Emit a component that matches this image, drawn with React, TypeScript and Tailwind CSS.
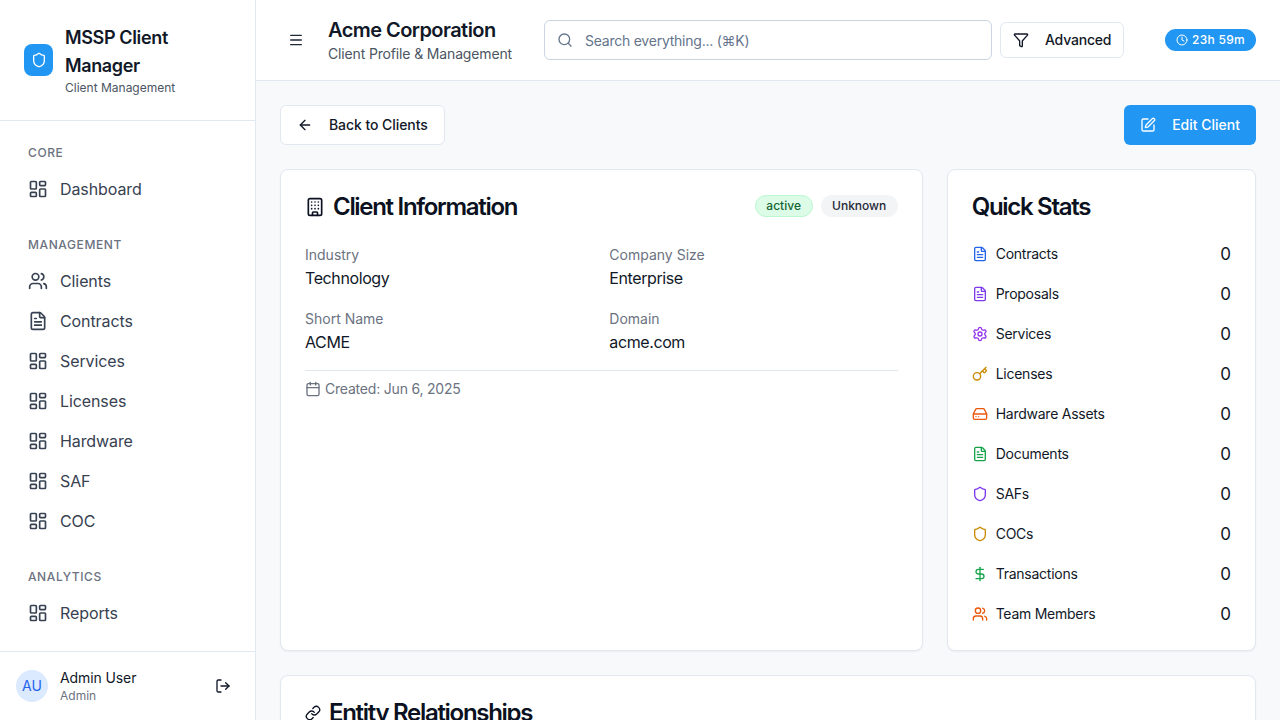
import {
  ArrowLeft,
  Building,
  Calendar,
  Clock,
  DollarSign,
  FileText,
  Filter,
  HardDrive,
  Key,
  LayoutDashboard,
  Link,
  LogOut,
  Menu,
  Search,
  Settings,
  Shield,
  SquarePen,
  Users,
} from 'lucide-react'

const navGroups = [
  { title: 'CORE', items: [{ label: 'Dashboard', icon: LayoutDashboard }] },
  {
    title: 'MANAGEMENT',
    items: [
      { label: 'Clients', icon: Users },
      { label: 'Contracts', icon: FileText },
      { label: 'Services', icon: LayoutDashboard },
      { label: 'Licenses', icon: LayoutDashboard },
      { label: 'Hardware', icon: LayoutDashboard },
      { label: 'SAF', icon: LayoutDashboard },
      { label: 'COC', icon: LayoutDashboard },
    ],
  },
  { title: 'ANALYTICS', items: [{ label: 'Reports', icon: LayoutDashboard }] },
]

const stats = [
  { label: 'Contracts', icon: FileText, color: 'text-[#2563eb]' },
  { label: 'Proposals', icon: FileText, color: 'text-[#7c3aed]' },
  { label: 'Services', icon: Settings, color: 'text-[#9333ea]' },
  { label: 'Licenses', icon: Key, color: 'text-[#ca8a04]' },
  { label: 'Hardware Assets', icon: HardDrive, color: 'text-[#ea580c]' },
  { label: 'Documents', icon: FileText, color: 'text-[#16a34a]' },
  { label: 'SAFs', icon: Shield, color: 'text-[#7c3aed]' },
  { label: 'COCs', icon: Shield, color: 'text-[#ca8a04]' },
  { label: 'Transactions', icon: DollarSign, color: 'text-[#16a34a]' },
  { label: 'Team Members', icon: Users, color: 'text-[#ea580c]' },
]

const fields = [
  { label: 'Industry', value: 'Technology' },
  { label: 'Company Size', value: 'Enterprise' },
  { label: 'Short Name', value: 'ACME' },
  { label: 'Domain', value: 'acme.com' },
]

const Sidebar = () => (
  <aside className="flex h-full w-64 shrink-0 flex-col border-r border-[#e2e8f0] bg-white">
    <div className="flex h-[121px] shrink-0 items-center gap-3 border-b border-[#e2e8f0] px-6">
      <div className="flex h-8 w-[29px] shrink-0 items-center justify-center rounded-lg bg-[#2196f3]">
        <Shield className="h-4 w-4 text-white" />
      </div>
      <div>
        <h1 className="text-lg leading-7 font-semibold tracking-[-0.36px] text-[#111827]">MSSP Client Manager</h1>
        <p className="text-xs text-[#4b5563]">Client Management</p>
      </div>
    </div>
    <nav className="min-h-0 flex-1 overflow-hidden px-3 pt-6">
      {navGroups.map(group => (
        <div key={group.title} className="mb-7">
          <h3 className="mb-2 h-4 px-4 text-xs leading-4 font-medium tracking-wider text-[#6b7280]">{group.title}</h3>
          {group.items.map(item => (
            <div key={item.label} className="flex h-10 items-center gap-3 px-4 text-base font-normal tracking-[-0.1px] text-[#374151]">
              <item.icon className="h-5 w-5 shrink-0" />
              <span>{item.label}</span>
            </div>
          ))}
        </div>
      ))}
    </nav>
    <div className="flex h-[69px] shrink-0 items-center gap-3 border-t border-[#e2e8f0] px-4">
      <div className="flex h-8 w-8 shrink-0 items-center justify-center rounded-full bg-[#dbeafe] text-sm text-[#2563eb]">AU</div>
      <div className="min-w-0 flex-1">
        <p className="text-sm leading-5 font-normal tracking-[-0.1px] text-[#111827]">Admin User</p>
        <p className="text-xs leading-4 text-[#6b7280]">Admin</p>
      </div>
      <button className="flex h-8 w-8 items-center justify-center text-[#111827]">
        <LogOut className="h-4 w-4" />
      </button>
    </div>
  </aside>
)

const Header = () => (
  <header className="flex h-[81px] shrink-0 items-center border-b border-[#e2e8f0] bg-white px-6">
    <button className="mr-4 flex h-8 w-8 items-center justify-center text-[#1f2937]">
      <Menu className="h-4 w-4" />
    </button>
    <div className="mr-8 w-[184px] shrink-0">
      <h2 className="text-xl leading-7 font-semibold tracking-[-0.55px] text-[#111827]">Acme Corporation</h2>
      <p className="text-sm leading-5 tracking-[-0.15px] whitespace-nowrap text-[#4b5563]">Client Profile &amp; Management</p>
    </div>
    <div className="flex h-10 w-[448px] items-center gap-3 rounded-md border border-[#cbd5e1] bg-white px-3 text-sm text-[#64748b]">
      <Search className="h-4 w-4 shrink-0" />
      <span className="translate-y-px tracking-[-0.24px]">Search everything... (⌘K)</span>
    </div>
    <button className="ml-2 flex h-9 w-[124px] items-center gap-4 rounded-md border border-[#e2e8f0] bg-white px-3 text-sm font-medium tracking-[-0.2px] text-[#111827]">
      <Filter className="h-4 w-4 shrink-0" />
      <span>Advanced</span>
    </button>
    <div className="ml-auto flex h-[22px] w-[91px] items-center justify-center gap-1 rounded-full bg-[#2196f3] text-xs font-medium tracking-[0.3px] text-white">
      <Clock className="h-3 w-3" />
      <span>23h 59m</span>
    </div>
  </header>
)

const ClientInfo = () => (
  <section className="col-span-2 rounded-lg border border-[#e2e8f0] bg-white p-6 shadow-xs">
    <div className="flex items-start justify-between">
      <h3 className="flex items-center gap-2 text-2xl leading-[26px] font-semibold tracking-[-1.3px] text-[#0b1120]">
        <Building className="h-5 w-5" />
        Client Information
      </h3>
      <div className="mt-px flex items-center gap-2">
        <span className="flex h-[22px] w-[58px] items-center justify-center rounded-full border border-[#bbf7d0] bg-[#dcfce7] text-xs font-medium text-[#166534]">active</span>
        <span className="flex h-[22px] w-[77px] items-center justify-center rounded-full bg-[#f3f4f6] text-xs font-medium text-[#1f2937]">Unknown</span>
      </div>
    </div>
    <div className="mt-[25px] grid grid-cols-2 gap-x-4 gap-y-[19px] border-b border-[#e2e8f0] pb-4">
      {fields.map(field => (
        <div key={field.label}>
          <p className="text-sm leading-5 font-normal text-[#6b7280]">{field.label}</p>
          <p className="mt-px text-base leading-6 tracking-[-0.4px] text-[#111827]">{field.value}</p>
        </div>
      ))}
    </div>
    <p className="mt-2 flex items-center gap-1 text-sm leading-5 tracking-[-0.2px] text-[#6b7280]">
      <Calendar className="h-4 w-4" />
      Created: Jun 6, 2025
    </p>
  </section>
)

const QuickStats = () => (
  <section className="h-[482px] rounded-lg border border-[#e2e8f0] bg-white p-6 shadow-xs">
    <h3 className="text-2xl leading-[26px] font-semibold tracking-[-1.3px] text-[#0b1120]">Quick Stats</h3>
    <div className="mt-[14px]">
      {stats.map(stat => (
        <div key={stat.label} className="flex h-10 items-center justify-between">
          <div className="flex items-center gap-2 text-sm tracking-[-0.25px] text-[#111827]">
            <stat.icon className={`h-4 w-4 ${stat.color}`} />
            <span>{stat.label}</span>
          </div>
          <span className="translate-y-px text-[17px] font-normal text-[#111827]">0</span>
        </div>
      ))}
    </div>
  </section>
)

export default function App() {
  return (
    <div className="flex h-screen w-full overflow-hidden bg-[#f8f9fb] font-['Inter',sans-serif]">
      <Sidebar />
      <div className="flex min-w-0 flex-1 flex-col">
        <Header />
        <main className="min-h-0 flex-1 overflow-hidden p-6">
          <div className="mb-6 flex items-center justify-between">
            <button className="flex h-10 items-center gap-4 rounded-md border border-[#e2e8f0] bg-white px-4 text-sm font-medium tracking-[-0.07px] text-[#111827]">
              <ArrowLeft className="h-4 w-4" />
              Back to Clients
            </button>
            <button className="flex h-10 items-center gap-4 rounded-md bg-[#2196f3] px-4 text-sm font-medium text-white">
              <SquarePen className="h-4 w-4" />
              Edit Client
            </button>
          </div>
          <div className="grid grid-cols-3 gap-6">
            <ClientInfo />
            <QuickStats />
          </div>
          <section className="mt-6 rounded-lg border border-[#e2e8f0] bg-white p-6 shadow-xs">
            <h3 className="flex items-center gap-2 text-2xl leading-[26px] font-semibold tracking-[-1.3px] text-[#0b1120]">
              <Link className="h-4 w-4" />
              Entity Relationships
            </h3>
          </section>
        </main>
      </div>
    </div>
  )
}
